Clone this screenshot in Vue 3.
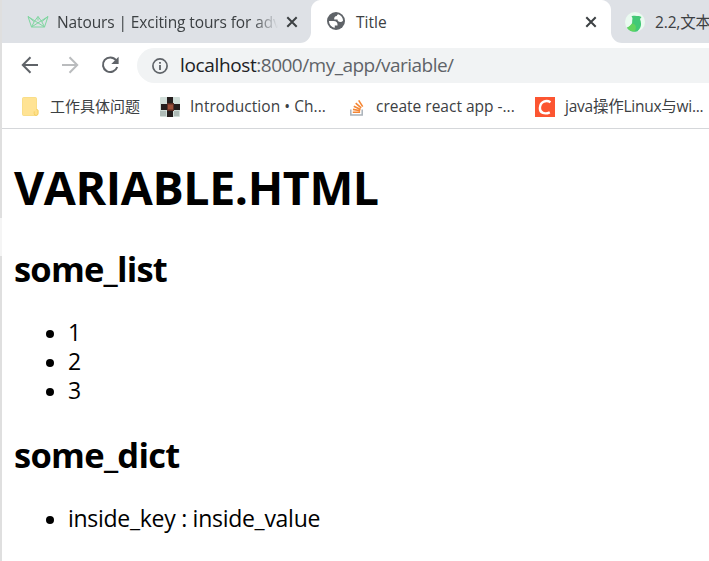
<script setup>
const numbers = [1, 2, 3]
const dict = [{ key: 'inside_key', value: 'inside_value' }]
</script>

<template>
  <div class="window">
    <div class="edge"><div class="edge-light"></div></div>
    <div class="browser">
      <div class="tabs">
        <div class="tab tab-left">
          <svg class="crown" width="22" height="14" viewBox="0 0 22 14" fill="none" stroke="#7fd6a0" stroke-width="1" stroke-linejoin="round">
            <path d="M1 1.500 4.500 12h13L21 1.500l-6.200 5.200L11 1.500 7.200 6.700zM1 1.500l16.500 10.500L14.800 6.700M21 1.500 4.500 12l2.700-5.300M11 1.500v4" />
          </svg>
          <span class="tab-text natours">Natours | Exciting tours for adv</span>
          <svg class="close" width="12" height="12" viewBox="0 0 12 12"><path d="M1.300 1.300l9.400 9.400M10.700 1.300 1.300 10.700" stroke="#3c4043" stroke-width="2" /></svg>
        </div>
        <div class="tab tab-active">
          <svg class="globe" width="18" height="18" viewBox="0 0 18 18">
            <circle cx="9" cy="9" r="9" fill="#5f6368" />
            <path d="M2 9h4.500c3 0 4.300 1.500 4 4.500H7.800v2.300C4.500 15.300 2 12.500 2 9z" fill="#fff" />
            <path d="M11.200 2.300C14 3.200 16.200 6 16 8.800c-.7.800-1.500 1.200-2.600 1.200-1.900 0-2.900-.8-2.900-2.400H7.200c-.2-2.400.7-3.600 2.600-3.600 0-.8.700-1.400 1.400-1.700z" fill="#fff" />
          </svg>
          <span class="tab-text title">Title</span>
          <svg class="close" width="12" height="12" viewBox="0 0 12 12"><path d="M1.300 1.300l9.400 9.400M10.700 1.300 1.300 10.700" stroke="#3c4043" stroke-width="2" /></svg>
        </div>
        <div class="tab tab-right">
          <svg class="bird" width="20" height="20" viewBox="0 0 20 20">
            <circle cx="10" cy="10" r="10" fill="#eafaf0" />
            <path d="M6.500 4.200c2.500-1 5-.4 7.500-.2l2.500 1-1.500 2c1.800 4.500 1.500 9-2.500 12.200-4 1.500-8 .3-10.500-3.500 3-1.200 5.300-3 5.200-6.500-.1-1.800 1-3-.7-5z" fill="#42c976" />
            <path d="M2 15.700c1.800-.8 3.400-2.500 5.200-4.200 3.800.5 4.800 4 2.500 7.800-3 .2-6-1-7.700-3.600z" fill="#62d45e" />
          </svg>
          <span class="tab-text">2.2,文本</span>
        </div>
      </div>

      <div class="toolbar">
        <svg class="back" width="18" height="18" viewBox="0 0 18 18" fill="none" stroke="#5f6368" stroke-width="2"><path d="M17 9H2M9.500 1.300 1.800 9l7.700 7.700" /></svg>
        <svg class="forward" width="18" height="18" viewBox="0 0 18 18" fill="none" stroke="#babcbe" stroke-width="2"><path d="M1 9h15M8.500 1.300 16.200 9l-7.700 7.700" /></svg>
        <svg class="reload" width="18" height="18" viewBox="0 0 18 18"><path d="M15 4.200A7.300 7.300 0 1 0 16.200 11" fill="none" stroke="#5f6368" stroke-width="2" /><path d="M17.600.8v7.300h-7.300z" fill="#5f6368" /></svg>
        <div class="address">
          <svg class="info" width="16" height="16" viewBox="0 0 16 16"><circle cx="8" cy="8" r="7.100" fill="none" stroke="#5f6368" stroke-width="1.700" /><path d="M7.100 7h1.800v5H7.100zM7.100 4h1.800v1.800H7.100z" fill="#5f6368" /></svg>
          <span class="url"><span class="host">localhost</span>:8000/my_app/variable/</span>
        </div>
      </div>

      <div class="bookmarks">
        <svg class="folder" width="17" height="19" viewBox="0 0 17 19"><path d="M1.500.5h12q1 0 1 1v11q1.500 0 1.500 1.200v2.800q0 2-2 2H1.500q-1 0-1-1v-16q0-1 1-1z" fill="#ffe394" stroke="#f8d978" stroke-width=".8" /><path d="M14.300 12.500q1.700 0 1.700 1.200v2.600q0 2.100-1.900 2.100t-1.900-1.700v-2.300" fill="#ffe08a" stroke="#f3cc59" stroke-width=".8" /></svg>
        <span class="mark m1">工作具体问题</span>
        <svg class="mosaic" width="20" height="20" viewBox="0 0 20 20">
          <rect width="20" height="20" rx="1" fill="#d0ddd8" />
          <path d="M7 0h6v6H7zM1 7h6v6H1zM13 7h7v6h-7zM7 14h6v6H7z" fill="#241d1d" />
          <path d="M7 6h7v8H7z" fill="#5a2d24" /><path d="M8 7.500h5v5H8z" fill="#9b4e38" /><path d="M0 14h6v5H0zM14 14h5v5h-5z" fill="#aebbb7" />
        </svg>
        <span class="mark m2">Introduction • Ch...</span>
        <svg class="stack" width="14" height="17" viewBox="0 0 14 17"><path d="M.8 10.500v5.600h11.400v-5.600" fill="none" stroke="#a9b1b9" stroke-width="1.500" /><path d="M2.800 13.300h7.300M3 10.400l7.200 1.300M3.800 7.300l6.800 3.100M5.700 4.100l5.500 4.800M8.700 1.400l4 6.200" stroke="#f48634" stroke-width="1.600" /></svg>
        <span class="mark m3">create react app -...</span>
        <svg class="csdn" width="20" height="20" viewBox="0 0 20 20"><rect width="20" height="20" fill="#fc5531" /><path d="M15.500 5.200C11.500 2.700 5.200 4.200 4.900 11c-.2 5.300 5 6.500 9.900 4.300" fill="none" stroke="#fff" stroke-width="2.400" /></svg>
        <span class="mark m4">java操作Linux与wi...</span>
      </div>

      <main class="page">
        <h1>VARIABLE.HTML</h1>
        <h2 class="h-list">some_list</h2>
        <ul>
          <li v-for="n in numbers" :key="n"><span>{{ n }}</span></li>
        </ul>
        <h2 class="h-dict">some_dict</h2>
        <ul>
          <li v-for="d in dict" :key="d.key"><span class="entry">{{ d.key }} : {{ d.value }}</span></li>
        </ul>
      </main>
    </div>
  </div>
</template>

<style>
body { background: #fff; }
</style>

<style scoped>
.window { display: flex; width: 709px; height: 561px; overflow: hidden; background: #fff; font-family: "Open Sans", "Noto Sans CJK SC", sans-serif; }
.window svg { display: block; flex: none; }
.edge { flex: none; width: 2px; background: #dfdfdf; padding-top: 218px; box-sizing: border-box; }
.edge-light { height: 38px; background: #f5f5f5; }
.browser { flex: none; width: 707px; }
.tabs { display: flex; height: 43px; background: #fff; }
.tab { display: flex; align-items: center; flex: none; height: 43px; box-sizing: border-box; background: #dee1e6; }
.tab-left { width: 309px; padding: 0 0 0 25px; border-bottom-right-radius: 11px; }
.tab-active { width: 300px; padding-left: 16px; background: #fff; position: relative; }
.tab-active::before, .tab-active::after { content: ""; position: absolute; top: 0; width: 10px; height: 10px; }
.tab-active::before { left: 0; background: radial-gradient(circle at 100% 100%, #fff 9.500px, #dee1e6 10.500px); }
.tab-active::after { right: 0; background: radial-gradient(circle at 0 100%, #fff 9.500px, #dee1e6 10.500px); }
.globe { margin-bottom: 1px; }
.tab-right { width: 98px; padding-left: 14px; border-bottom-left-radius: 11px; }
.tab-text { flex: none; font-size: 15.500px; line-height: 22px; color: #3c4043; white-space: nowrap; }
.natours { width: 222px; margin-left: 8px; letter-spacing: -.11px; mask-image: linear-gradient(90deg, #000 196px, transparent 221px); }
.tab-left .close { margin-left: 7px; }
.title { width: 218px; margin-left: 11px; }
.tab-active .close { margin-left: 11px; }
.tab-right .tab-text { margin-left: 10px; letter-spacing: -.15px; }
.toolbar { display: flex; align-items: center; height: 43px; padding-left: 19px; }
.forward { margin-left: 22px; }
.reload { margin-left: 22px; }
.address { display: flex; align-items: center; width: 572px; height: 35px; margin: 2px 0 0 18px; padding-left: 15px; box-sizing: border-box; border-radius: 18px 0 0 18px; background: #f1f3f4; }
.url { margin-left: 12px; font-size: 19px; line-height: 26px; letter-spacing: -.53px; color: #5f6368; white-space: nowrap; margin-bottom: 2px; }
.host { color: #202124; letter-spacing: -.36px; }
.bookmarks { display: flex; align-items: center; height: 43px; padding-left: 20px; box-sizing: border-box; border-bottom: 1px solid #d5d7da; }
.folder { margin-bottom: 1px; }
.mark { flex: none; font-size: 15.500px; line-height: 22px; color: #3c4043; white-space: nowrap; margin-bottom: 2px; }
.m1 { width: 90px; margin-left: 11px; font-size: 15px; }
.mosaic { margin-left: 20px; }
.m2 { width: 138px; margin-left: 10px; letter-spacing: .04px; }
.stack { margin-left: 22px; }
.m3 { width: 140px; margin-left: 12px; }
.csdn { margin-left: 19px; }
.m4 { width: 144px; margin-left: 10px; letter-spacing: -.25px; }
.page { padding: 27px 0 0 12px; color: #000; }
h1, h2, ul { margin: 0; padding: 0; white-space: nowrap; }
h1 { font-size: 46.500px; line-height: 62px; letter-spacing: -.4px; }
h2 { font-size: 34.500px; line-height: 48px; letter-spacing: -.8px; }
.h-list { margin-top: 27px; }
.h-dict { margin-top: 26px; letter-spacing: -.72px; }
ul { list-style: none; margin-top: 25px; }
li { display: flex; align-items: center; height: 29px; padding-left: 32px; font-size: 23px; line-height: 29px; }
li::before { content: ""; width: 8px; height: 8px; margin: 2px 14px 0 0; border-radius: 50%; background: #000; }
.entry { letter-spacing: -.28px; }
</style>
